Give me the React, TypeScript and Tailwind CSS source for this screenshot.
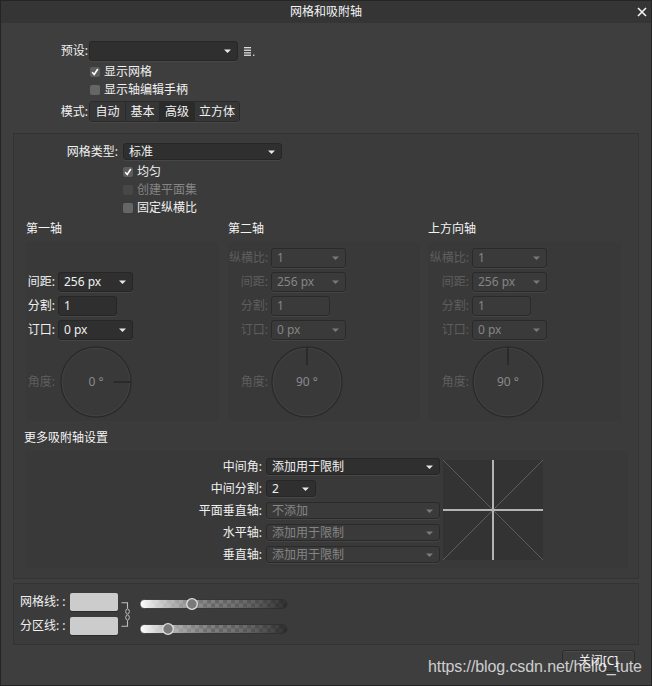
import React from 'react';
import clsx from 'clsx';

// Small down-pointing triangle used in dropdowns
const Caret = ({ dim }: { dim?: boolean }) => (
  <svg width="7" height="4" viewBox="0 0 7 4" className="shrink-0">
    <path d="M0 0.5H7L3.5 4Z" fill={dim ? '#7a7a7a' : '#e8e8e8'} />
  </svg>
);

interface SelectProps {
  value?: string;
  dim?: boolean;
  className: string;
}

const Select: React.FC<SelectProps> = ({ value, dim, className }) => (
  <div
    className={clsx(
      'shrink-0 flex items-center justify-between rounded-[3px] border pl-[5px] pr-[6px] leading-none whitespace-nowrap',
      dim
        ? 'bg-[#3a3a3a] border-[#2a2a2a] text-[#858585] shadow-[0_1px_0_#454545]'
        : 'bg-[#2f2f2f] border-[#262626] text-[#f0f0f0] shadow-[0_1px_0_#474747]',
      className
    )}
  >
    <span>{value}</span>
    <Caret dim={dim} />
  </div>
);

const Input = ({ value, dim, className }: SelectProps) => (
  <div
    className={clsx(
      'shrink-0 flex items-center rounded-[3px] border pl-[5px] leading-none',
      dim
        ? 'bg-[#3a3a3a] border-[#2a2a2a] text-[#858585] shadow-[0_1px_0_#454545]'
        : 'bg-[#2f2f2f] border-[#262626] text-[#f0f0f0] shadow-[0_1px_0_#474747]',
      className
    )}
  >
    {value}
  </div>
);

const Checkbox = ({ checked, disabled, label }: { checked?: boolean; disabled?: boolean; label: string }) => (
  <div className="flex items-center h-[18px]">
    <div
      className={clsx(
        'w-[10px] h-[10px] rounded-[2px] flex items-center justify-center',
        disabled ? 'bg-[#474747]' : checked ? 'bg-[#5c5c5c]' : 'bg-[#666666]'
      )}
    >
      {checked && (
        <svg width="8" height="8" viewBox="0 0 8 8">
          <path d="M1.2 4.3L3.2 6.5L6.8 1" stroke="#ffffff" strokeWidth="1.6" fill="none" />
        </svg>
      )}
    </div>
    <span className={clsx('ml-[4px] whitespace-nowrap', disabled ? 'text-[#858585]' : 'text-[#f0f0f0]')}>{label}</span>
  </div>
);

const Dial = ({ angle }: { angle: number }) => (
  <div className="relative w-[72px] h-[72px] flex items-center justify-center">
    <svg width="72" height="72" viewBox="0 0 72 72" className="absolute left-0 top-0">
      <circle cx="36" cy="36" r="35" fill="none" stroke="#2a2a2a" strokeWidth="1.3" />
      <circle cx="36" cy="36" r="33.8" fill="none" stroke="#444444" strokeWidth="0.8" />
      {angle === 0 ? (
        <line x1="54" y1="36" x2="71" y2="36" stroke="#2a2a2a" strokeWidth="2" />
      ) : (
        <line x1="36" y1="1" x2="36" y2="19" stroke="#2a2a2a" strokeWidth="2" />
      )}
    </svg>
    <span className="relative text-[#8a8a8a]">{angle} °</span>
  </div>
);

interface AxisRow {
  label: string;
  kind: 'select' | 'input';
  value: string;
}

interface AxisProps {
  title: string;
  rows: (AxisRow | null)[];
  dim: boolean;
  angle: number;
  labelClass: string;
  panelClass: string;
  dialClass: string;
}

const AxisPanel: React.FC<AxisProps> = ({ title, rows, dim, angle, labelClass, panelClass, dialClass }) => (
  <div className="flex flex-col">
    <div className="h-[18px] leading-[18px] text-[#f4f4f4] whitespace-nowrap">{title}</div>
    <div className={clsx('mt-[4px] h-[179px] bg-[#393939] pt-[6px] pl-[1px] flex flex-col gap-[4px]', panelClass)}>
      {rows.map((row, i) =>
        row ? (
          <div key={i} className="flex items-center h-[20px]">
            <div className={clsx('shrink-0 text-right whitespace-nowrap', labelClass, dim ? 'text-[#5e5e5e]' : 'text-[#f0f0f0]')}>
              {row.label}
            </div>
            {row.kind === 'select' ? (
              <Select value={row.value} dim={dim} className="ml-[3px] w-[75px] h-[20px]" />
            ) : (
              <Input value={row.value} dim={dim} className="ml-[3px] w-[59px] h-[20px]" />
            )}
          </div>
        ) : (
          <div key={i} className="h-[20px]" />
        )
      )}
      <div className="flex items-center mt-[2px]">
        <div className={clsx('shrink-0 text-right whitespace-nowrap text-[#5e5e5e]', labelClass)}>角度:</div>
        <div className={dialClass}>
          <Dial angle={angle} />
        </div>
      </div>
    </div>
  </div>
);

const Slider = ({ pos, id }: { pos: number; id: string }) => (
  <svg width="150" height="14" viewBox="0 0 150 14">
    <defs>
      <pattern id={`chk-${id}`} width="8" height="8" patternUnits="userSpaceOnUse" y="2.5">
        <rect width="8" height="8" fill="#4a4a4a" />
        <rect width="4" height="4" fill="#6e6e6e" />
        <rect x="4" y="4" width="4" height="4" fill="#6e6e6e" />
      </pattern>
      <linearGradient id={`grad-${id}`} x1="0" x2="1" y1="0" y2="0">
        <stop offset="0" stopColor="#ffffff" stopOpacity="1" />
        <stop offset="0.5" stopColor="#9a9a9a" stopOpacity="0.35" />
        <stop offset="1" stopColor="#202020" stopOpacity="0.8" />
      </linearGradient>
    </defs>
    <rect x="1" y="2.5" width="147" height="9" rx="4.5" fill={`url(#chk-${id})`} />
    <rect x="1" y="2.5" width="147" height="9" rx="4.5" fill={`url(#grad-${id})`} stroke="#2c2c2c" strokeWidth="0.8" />
    <circle cx={pos} cy="7" r="5.3" fill="#7a7a7a" stroke="#e0e0e0" strokeWidth="1.3" />
  </svg>
);

const App: React.FC = () => {
  const firstRows: (AxisRow | null)[] = [
    null,
    { label: '间距:', kind: 'select', value: '256 px' },
    { label: '分割:', kind: 'input', value: '1' },
    { label: '订口:', kind: 'select', value: '0 px' },
  ];
  const otherRows: AxisRow[] = [
    { label: '纵横比:', kind: 'select', value: '1' },
    { label: '间距:', kind: 'select', value: '256 px' },
    { label: '分割:', kind: 'input', value: '1' },
    { label: '订口:', kind: 'select', value: '0 px' },
  ];

  const moreRows = [
    { label: '中间角:', value: '添加用于限制', dim: false, w: 'w-[174px]' },
    { label: '中间分割:', value: '2', dim: false, w: 'w-[50px]' },
    { label: '平面垂直轴:', value: '不添加', dim: true, w: 'w-[174px]' },
    { label: '水平轴:', value: '添加用于限制', dim: true, w: 'w-[174px]' },
    { label: '垂直轴:', value: '添加用于限制', dim: true, w: 'w-[174px]' },
  ];

  return (
    <div className="relative w-[652px] h-[686px] bg-[#3e3e3e] border border-[#242424] flex flex-col overflow-hidden text-[12px] text-[#f0f0f0] font-['Noto_Sans','Noto_Sans_CJK_SC',sans-serif] select-none">
      {/* Title bar */}
      <div className="relative h-[22px] shrink-0 bg-[#353535] flex items-center justify-center">
        <span className="text-[12px] text-[#f4f4f4]">网格和吸附轴</span>
        <svg width="10" height="10" viewBox="0 0 10 10" className="absolute right-[4px] top-[6px]">
          <path d="M1 1L9 9M9 1L1 9" stroke="#f4f4f4" strokeWidth="1.6" />
        </svg>
      </div>

      {/* Presets */}
      <div className="mt-[18px] flex items-center h-[20px]">
        <div className="w-[87px] text-right">预设:</div>
        <Select className="ml-[1px] w-[149px] h-[20px]" />
        <svg width="12" height="9" viewBox="0 0 12 9" className="ml-[6px] mt-[1px]">
          <rect x="0" y="0" width="7" height="1.3" fill="#dddddd" />
          <rect x="0" y="2.6" width="7" height="1.3" fill="#dddddd" />
          <rect x="0" y="5.2" width="7" height="1.3" fill="#dddddd" />
          <rect x="0" y="7.6" width="7" height="1.3" fill="#dddddd" />
          <rect x="9" y="7.6" width="1.4" height="1.3" fill="#dddddd" />
        </svg>
      </div>
      <div className="mt-[2px] ml-[89px]">
        <Checkbox checked label="显示网格" />
        <Checkbox label="显示轴编辑手柄" />
      </div>
      <div className="mt-[2px] flex items-center h-[21px]">
        <div className="w-[87px] text-right">模式:</div>
        <div className="ml-[1px] flex h-[21px] rounded-[3px] border border-[#2a2a2a] overflow-hidden shadow-[0_1px_0_#474747]">
          <div className="w-[35px] flex items-center justify-center bg-[#363636]">自动</div>
          <div className="w-[34px] flex items-center justify-center bg-[#363636] border-l border-[#2a2a2a]">基本</div>
          <div className="w-[35px] flex items-center justify-center bg-[#2b2b2b] border-l border-[#2a2a2a]">高级</div>
          <div className="w-[45px] flex items-center justify-center bg-[#363636] border-l border-[#2a2a2a]">立方体</div>
        </div>
      </div>

      {/* Main panel */}
      <div className="mt-[11px] ml-[12px] w-[626px] border border-[#333333] bg-[#3b3b3b] pt-[9px] pb-[10px] flex flex-col">
        <div className="flex items-center h-[17px]">
          <div className="w-[104px] text-right">网格类型:</div>
          <Select value="标准" className="ml-[5px] w-[159px] h-[17px]" />
        </div>
        <div className="mt-[3px] ml-[109px]">
          <Checkbox checked label="均匀" />
          <Checkbox disabled label="创建平面集" />
          <Checkbox label="固定纵横比" />
        </div>

        <div className="mt-[3px] pl-[12px] flex">
          <AxisPanel
            title="第一轴"
            rows={firstRows}
            dim={false}
            angle={0}
            labelClass="w-[28px]"
            panelClass="w-[193px]"
            dialClass="ml-[5px]"
          />
          <div className="ml-[9px]">
            <AxisPanel
              title="第二轴"
              rows={otherRows}
              dim
              angle={90}
              labelClass="w-[39px]"
              panelClass="w-[192px]"
              dialClass="ml-[3px]"
            />
          </div>
          <div className="ml-[8px]">
            <AxisPanel
              title="上方向轴"
              rows={otherRows}
              dim
              angle={90}
              labelClass="w-[40px]"
              panelClass="w-[193px]"
              dialClass="ml-[3px]"
            />
          </div>
        </div>

        <div className="mt-[8px] pl-[10px] h-[18px] leading-[18px] text-[#f4f4f4]">更多吸附轴设置</div>
        <div className="mt-[4px] ml-[11px] w-[603px] h-[117px] bg-[#393939] pt-[7px] flex">
          <div className="flex flex-col gap-[5px]">
            {moreRows.map((r) => (
              <div key={r.label} className="flex items-center h-[17px]">
                <div className="w-[237px] text-right whitespace-nowrap">{r.label}</div>
                <Select value={r.value} dim={r.dim} className={clsx('ml-[4px] h-[17px]', r.w)} />
              </div>
            ))}
          </div>
          <svg width="100" height="100" viewBox="0 0 100 100" className="ml-[3px] mt-[2px]">
            <rect width="100" height="100" fill="#333333" />
            <line x1="0" y1="0" x2="100" y2="100" stroke="#5e5e5e" strokeWidth="1" />
            <line x1="100" y1="0" x2="0" y2="100" stroke="#5e5e5e" strokeWidth="1" />
            <line x1="50" y1="0" x2="50" y2="100" stroke="#b4b4b4" strokeWidth="2" />
            <line x1="0" y1="50" x2="100" y2="50" stroke="#b4b4b4" strokeWidth="2" />
          </svg>
        </div>
      </div>

      {/* Colour panel */}
      <div className="mt-[4px] ml-[12px] w-[626px] h-[62px] border border-[#333333] bg-[#3b3b3b] pt-[9px] pl-[6px] flex">
        <div className="w-[50px] flex flex-col gap-[6px]">
          <div className="h-[18px] leading-[18px] whitespace-nowrap">网格线: :</div>
          <div className="h-[18px] leading-[18px] whitespace-nowrap">分区线: :</div>
        </div>
        <div className="flex flex-col gap-[6px]">
          <div className="w-[48px] h-[18px] rounded-[2px] bg-[#cccccc] shadow-[0_1px_0_#2a2a2a]" />
          <div className="w-[48px] h-[18px] rounded-[2px] bg-[#cccccc] shadow-[0_1px_0_#2a2a2a]" />
        </div>
        <svg width="9" height="25" viewBox="0 0 9 25" className="ml-[3px] mt-[9px]">
          <path d="M0.5 0.7H6.5V6.5M6.5 18.5V24.3H0.5" stroke="#bdbdbd" strokeWidth="1.1" fill="none" />
          <ellipse cx="6.5" cy="9.5" rx="1.8" ry="2.6" stroke="#bdbdbd" strokeWidth="1" fill="none" />
          <ellipse cx="6.5" cy="15.5" rx="1.8" ry="2.6" stroke="#bdbdbd" strokeWidth="1" fill="none" />
        </svg>
        <div className="ml-[9px] pt-[4px] flex flex-col gap-[11px]">
          <Slider id="a" pos={53} />
          <Slider id="b" pos={29} />
        </div>
      </div>

      {/* Close button */}
      <div className="mt-[5px] self-end mr-[16px] w-[73px] h-[22px] rounded-[3px] border border-[#2c2c2c] bg-[#3f3f3f] shadow-[inset_0_1px_0_#4c4c4c] flex items-center justify-center">
        关闭[C]
      </div>

      {/* Watermark */}
      <div className="absolute left-[427px] top-[656px] text-[16px] leading-[20px] text-white/75 font-['Liberation_Sans',sans-serif] tracking-[-0.1px]">
        https://blog.csdn.net/hello_tute
      </div>
    </div>
  );
};

export default App;
